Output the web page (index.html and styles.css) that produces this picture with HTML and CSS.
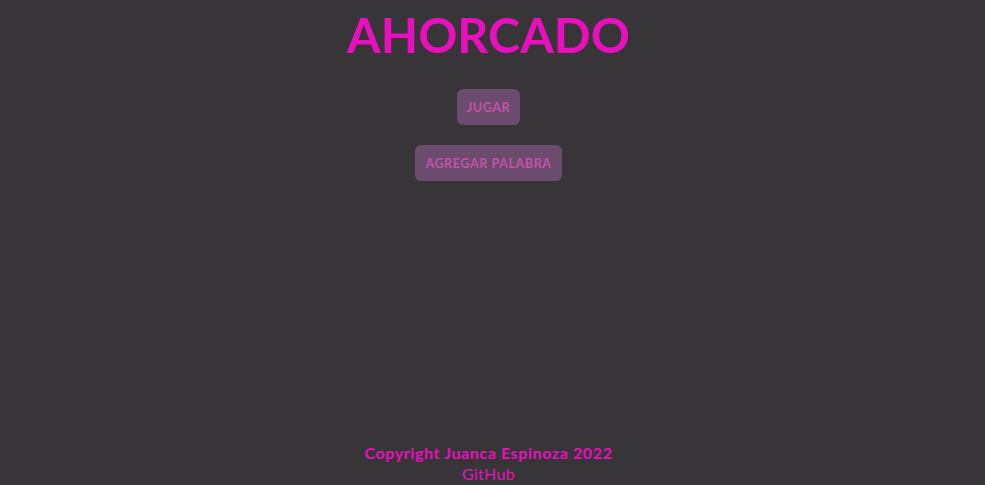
FILE: index.html
```html
<!DOCTYPE html>
<html lang="es">
<head>
<meta charset="utf-8">
<title>Ahorcado</title>
<link rel="stylesheet" href="styles.css">
</head>
<body>
<div class="page">
  <header class="header">
    <h1 class="title">AHORCADO</h1>
  </header>
  <main class="menu">
    <button class="btn">JUGAR</button>
    <button class="btn">AGREGAR PALABRA</button>
  </main>
  <footer class="footer">
    <p class="copy">Copyright Juanca Espinoza 2022</p>
    <a class="link" href="#">GitHub</a>
  </footer>
</div>
</body>
</html>
```
FILE: styles.css
```css
html, body {
  margin: 0;
  padding: 0;
  background: #383538;
  height: 100%;
  overflow: hidden;
}
.page {
  font-family: "Lato", "Open Sans", sans-serif;
  display: flex;
  flex-direction: column;
  align-items: center;
  min-height: 100vh;
  padding-right: 8px;
}
.header {
  padding-top: 4px;
}
.title {
  margin: 0;
  color: #e90fbf;
  font-size: 48.5px;
  font-weight: 700;
  letter-spacing: 0;
  line-height: 60px;
}
.menu {
  display: flex;
  flex-direction: column;
  align-items: center;
  gap: 20px;
  margin-top: 25px;
  flex: 1;
}
.btn {
  font-family: inherit;
  background: #6b4b6e;
  color: #c552a8;
  border: none;
  border-radius: 6px;
  height: 36px;
  padding: 0 10px;
  font-size: 12.5px;
  font-weight: 700;
  letter-spacing: 0.6px;
  cursor: pointer;
}
.footer {
  display: flex;
  flex-direction: column;
  align-items: center;
  margin-bottom: 1px;
}
.copy {
  margin: 0;
  color: #e90fbf;
  font-size: 16px;
  font-weight: 700;
  letter-spacing: 0.6px;
  line-height: 21px;
}
.link {
  color: #e90fbf;
  font-size: 16px;
  line-height: 21px;
  letter-spacing: 0.3px;
  text-decoration: none;
}
```
